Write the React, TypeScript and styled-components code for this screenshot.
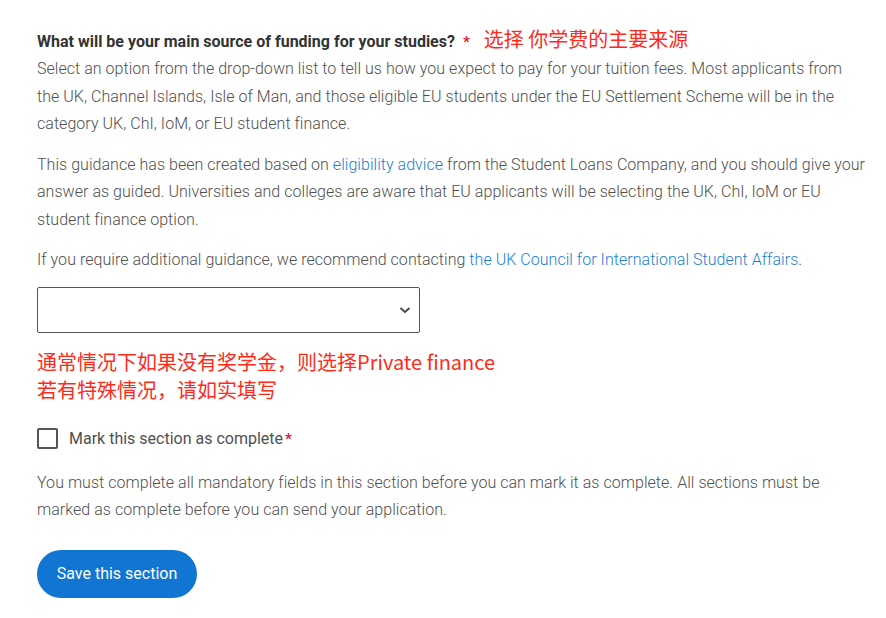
import React from 'react';
import styled, { createGlobalStyle } from 'styled-components';

const GlobalStyle = createGlobalStyle`
  html, body {
    margin: 0;
    padding: 0;
    background: #ffffff;
  }
  body {
    font-family: Roboto, "Noto Sans CJK SC", sans-serif;
    color: #555555;
    -webkit-font-smoothing: antialiased;
  }
`;

const Page = styled.div`
  width: 829px;
  padding: 26px 0 20px 37px;
`;

const QuestionRow = styled.div`
  display: flex;
  align-items: baseline;
  line-height: 26px;
`;

const QuestionLabel = styled.label`
  font-size: 16px;
  font-weight: 700;
  color: #333333;
`;

const Required = styled.span<{ $gap?: number }>`
  color: #d6213c;
  font-weight: 700;
  font-size: 15px;
  margin-left: ${(p) => p.$gap ?? 6}px;
`;

const Note = styled.span`
  font-family: "Noto Sans CJK SC", sans-serif;
  color: #ff2a1a;
  font-size: 20px;
  margin-left: 14px;
`;

const Paragraph = styled.p<{ $top?: number }>`
  margin: ${(p) => p.$top ?? 13}px 0 0;
  font-size: 16px;
  font-weight: 300;
  line-height: 27.5px;
  letter-spacing: 0.04px;
  color: #505050;
`;

const Link = styled.a`
  color: #1a7fd4;
  text-decoration: none;
`;

const SelectWrap = styled.div`
  position: relative;
  width: 383px;
  margin-top: 13px;
`;

const Select = styled.select`
  appearance: none;
  display: block;
  width: 100%;
  height: 46px;
  border: 1px solid #555555;
  border-radius: 2px;
  background: #ffffff;
  font-family: Roboto, sans-serif;
  font-size: 16px;
  padding: 0 40px 0 12px;
  outline: none;
`;

const Chevron = styled.svg`
  position: absolute;
  right: 9px;
  top: 18px;
  pointer-events: none;
`;

const Hint = styled.div`
  margin-top: 15px;
  font-family: "Noto Sans CJK SC", sans-serif;
  font-size: 20px;
  line-height: 28px;
  color: #ff2a1a;
`;

const CheckRow = styled.label`
  display: flex;
  align-items: center;
  gap: 11px;
  margin-top: 24px;
  font-size: 16px;
  color: #505050;
`;

const Box = styled.span`
  width: 17px;
  height: 17px;
  border: 2px solid #555555;
  border-radius: 2px;
  flex: none;
`;

const SaveButton = styled.button`
  display: block;
  margin-top: 26px;
  width: 160px;
  height: 48px;
  border: none;
  border-radius: 24px;
  background: #1176d2;
  color: #ffffff;
  font-family: Roboto, sans-serif;
  font-size: 16px;
  font-weight: 400;
  cursor: pointer;
`;

export default function App() {
  return (
    <>
      <GlobalStyle />
      <Page>
        <QuestionRow>
          <QuestionLabel>What will be your main source of funding for your studies?</QuestionLabel>
          <Required $gap={8}>*</Required>
          <Note>选择 你学费的主要来源</Note>
        </QuestionRow>
        <Paragraph $top={0}>
          Select an option from the drop-down list to tell us how you expect to pay for your tuition
          fees. Most applicants from the UK, Channel Islands, Isle of Man, and those eligible EU
          students under the EU Settlement Scheme will be in the category UK, ChI, IoM, or EU
          student finance.
        </Paragraph>
        <Paragraph>
          This guidance has been created based on <Link href="#">eligibility advice</Link> from the
          Student Loans Company, and you should give your answer as guided. Universities and
          colleges are aware that EU applicants will be selecting the UK, ChI, IoM or EU student
          finance option.
        </Paragraph>
        <Paragraph>
          If you require additional guidance, we recommend contacting{' '}
          <Link href="#">the UK Council for International Student Affairs</Link>.
        </Paragraph>
        <SelectWrap>
          <Select defaultValue="">
            <option value=""></option>
            <option>Private finance</option>
          </Select>
          <Chevron width="12" height="10" viewBox="0 0 12 10">
            <path d="M1.5 3 L6 7 L10.5 3" fill="none" stroke="#444" strokeWidth="1.8" />
          </Chevron>
        </SelectWrap>
        <Hint>
          通常情况下如果没有奖学金，则选择Private finance
          <br />
          若有特殊情况，请如实填写
        </Hint>
        <CheckRow>
          <Box />
          <span>
            Mark this section as complete
            <Required $gap={2}>*</Required>
          </span>
        </CheckRow>
        <Paragraph $top={20}>
          You must complete all mandatory fields in this section before you can mark it as complete.
          All sections must be marked as complete before you can send your application.
        </Paragraph>
        <SaveButton>Save this section</SaveButton>
      </Page>
    </>
  );
}
